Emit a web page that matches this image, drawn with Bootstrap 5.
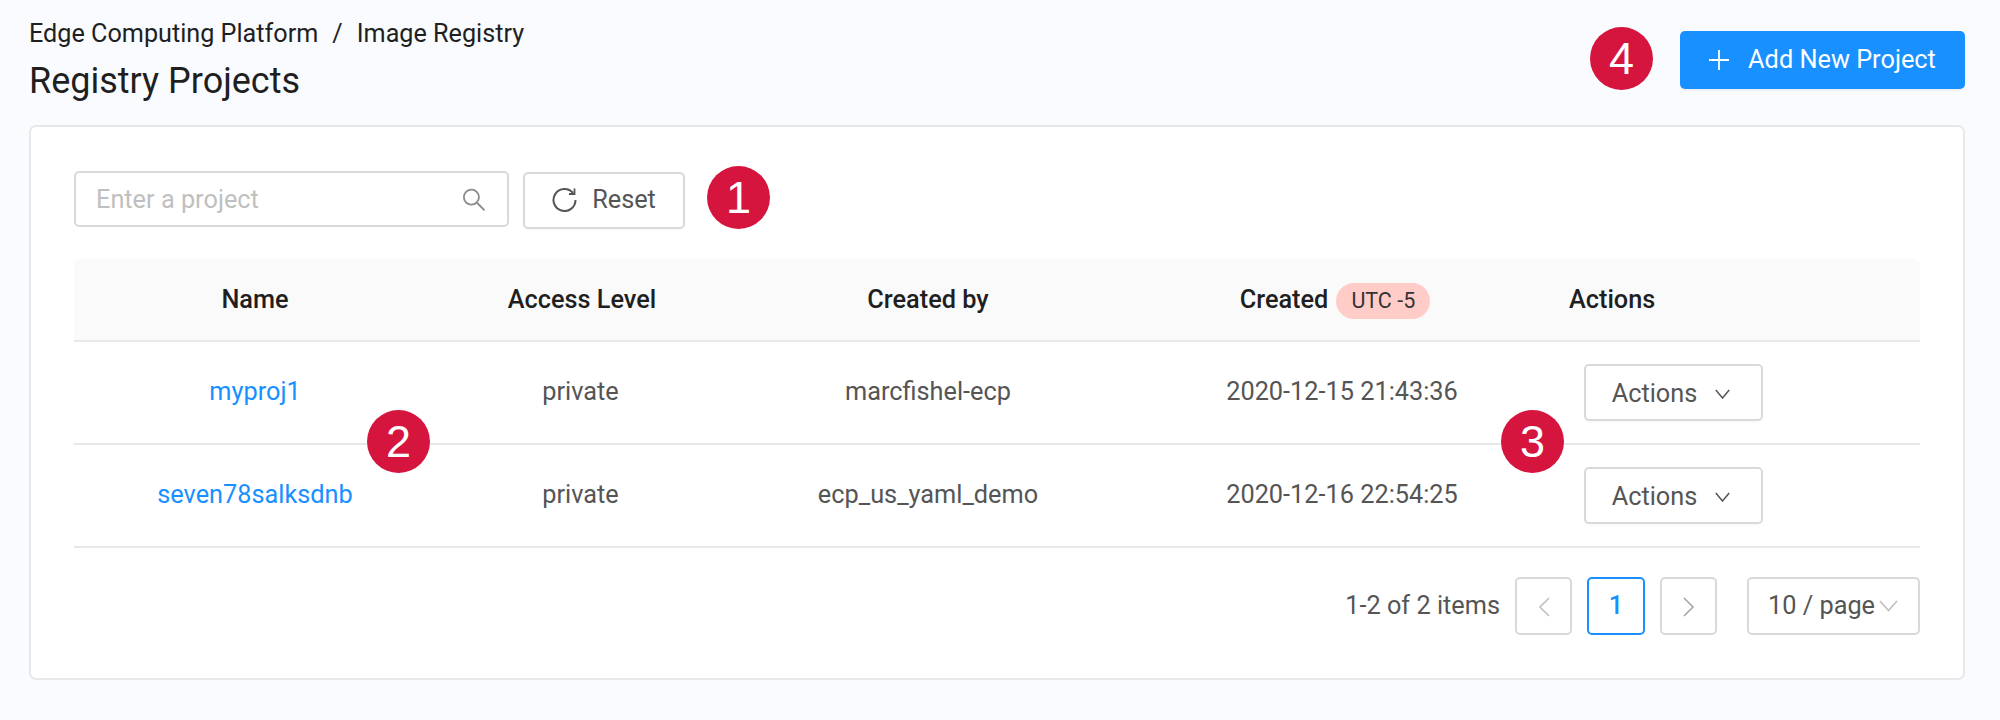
<!DOCTYPE html>
<html lang="en">
<head>
<meta charset="utf-8">
<title>Registry Projects</title>
<link href="https://cdn.jsdelivr.net/npm/bootstrap@5.3.0/dist/css/bootstrap.min.css" rel="stylesheet">
<style>
html,body{height:720px;overflow:hidden}
body{background:#f9fbff;font-family:Roboto,"Liberation Sans",sans-serif;color:#555;font-size:25.3px}
.shell{padding:17px 35px 0 29px}
.top-bar{height:108px}
.crumbs{font-size:25.2px;line-height:34px;color:#1f1f1f}
.crumb-sep{margin:0 14px}
.page-title{font-size:36px;font-weight:400;line-height:44px;color:#1f1f1f;margin:8px 0 0}
.add-btn{width:285px;height:58px;background:#1890ff;border:0;color:#fff;font-size:25.3px;border-radius:5px;margin-top:14px;box-shadow:0 2px 0 rgba(0,0,0,.04);gap:19px}
.add-btn:hover{background:#1890ff;color:#fff}
.panel{height:555px;background:#fff;border:2px solid #e8e8ea;border-radius:7px;padding:44px 43px 0 43px;position:relative}
.search-box{width:435px;height:56px;border:2px solid #d9d9d9;border-radius:5px;padding:0 22px 0 20px;background:#fff}
.search-input{border:0;outline:0;background:transparent;font-size:25.3px;color:#555;width:100%;padding:2px 0 0}
.search-input::placeholder{color:#bfbfbf;opacity:1}
.ghost-btn{height:57px;border:2px solid #d9d9d9;background:#fff;border-radius:5px;color:#555;font-size:25.3px;padding:0;box-shadow:0 2px 0 rgba(0,0,0,.015)}
.reset-btn{width:162px;margin-left:14px;margin-top:1px;gap:15px;padding-bottom:2px}
.marker{width:63px;height:63px;border-radius:50%;background:#d6153e;color:#fff;font-family:"Liberation Sans",Arial,sans-serif;font-size:45px;line-height:1;flex:none}
.marker-one{margin-left:22px;margin-top:-5px}
.marker-four{margin:10px 27px 0 0}
.marker-over{position:absolute;top:283px}
.marker-two{left:336px}
.marker-three{left:1470px}
.grid-wrap{margin-top:30px}
.data-grid{table-layout:fixed;width:1846px;margin:0;--bs-table-bg:transparent;color:#555}
.data-grid th,.data-grid td{text-align:center;border-bottom:2px solid #e8e8e8;padding:0;vertical-align:middle;font-size:25.3px}
.data-grid th{height:82px;background:#fafafa;color:#1f1f1f;font-weight:500}
.data-grid th:first-child{border-top-left-radius:7px}
.data-grid th:last-child{border-top-right-radius:7px;text-align:left;padding-left:27px}
.data-grid td{height:103px;padding-bottom:2px}
.data-grid td.access-cell{padding-right:3px}
.data-grid td.date-cell{padding-left:14px}
.data-grid td:last-child{text-align:left;padding-left:42px;padding-bottom:0}
.proj-link{color:#1890ff;text-decoration:none}
.utc-pill{display:inline-block;height:36px;line-height:36px;width:94px;text-align:center;border-radius:18px;background:#ffccc7;color:#333;font-size:21.5px;font-weight:400;margin-left:8px}
.action-btn{width:179px;height:57px;display:inline-flex;align-items:center;justify-content:center;gap:18px;padding:2px 5px 0 0}
.foot-row{margin-top:29px}
.page-btn{width:57px;height:58px;border:2px solid #d9d9d9;border-radius:5px;background:#fff;padding:0;color:#bfbfbf}
.page-btn.current{width:58px;margin:0 15px;border-color:#1890ff;color:#1890ff;font-size:25.3px;font-weight:500}
.size-box{width:173px;height:58px;border:2px solid #d9d9d9;border-radius:5px;padding:0 20px 0 19px;margin-left:30px;color:#555}
.foot-total{margin-right:15px}
</style>
</head>
<body>
<div class="shell">
  <div class="top-bar d-flex justify-content-between align-items-start">
    <div>
      <div class="crumbs">Edge Computing Platform<span class="crumb-sep">/</span>Image Registry</div>
      <h1 class="page-title">Registry Projects</h1>
    </div>
    <div class="d-flex align-items-start">
      <div class="marker marker-four d-flex align-items-center justify-content-center">4</div>
      <button type="button" class="btn add-btn d-flex align-items-center justify-content-center">
        <svg width="20" height="20" viewBox="0 0 20 20" fill="none" stroke="#fff" stroke-width="1.8"><path d="M10 0v20M0 10h20"/></svg>
        <span>Add New Project</span>
      </button>
    </div>
  </div>
  <div class="panel">
    <div class="d-flex align-items-start">
      <div class="search-box d-flex align-items-center">
        <input class="search-input" type="text" placeholder="Enter a project">
        <svg class="flex-none" width="25" height="25" viewBox="0 0 25 25" fill="none" stroke="#8c8c8c" stroke-width="2"><circle cx="10" cy="10" r="8"/><path d="M16 16l8 8"/></svg>
      </div>
      <button type="button" class="btn ghost-btn reset-btn d-flex align-items-center justify-content-center">
        <svg width="25" height="25" viewBox="0 0 25 25" fill="none" stroke="#555" stroke-width="2"><path d="M21 6A11 11 0 1 0 23.5 13"/><path d="M22.5 1.5v5.5h-5.5" stroke-width="1.8"/></svg>
        <span>Reset</span>
      </button>
      <div class="marker marker-one d-flex align-items-center justify-content-center">1</div>
    </div>
    <div class="grid-wrap">
      <table class="table data-grid">
        <colgroup><col style="width:362px"><col style="width:292px"><col style="width:400px"><col style="width:414px"><col style="width:378px"></colgroup>
        <thead>
          <tr><th>Name</th><th>Access Level</th><th>Created by</th><th>Created<span class="utc-pill">UTC -5</span></th><th>Actions</th></tr>
        </thead>
        <tbody>
          <tr>
            <td><a class="proj-link" href="#">myproj1</a></td><td class="access-cell">private</td><td>marcfishel-ecp</td><td class="date-cell">2020-12-15 21:43:36</td>
            <td><button type="button" class="btn ghost-btn action-btn"><span>Actions</span><svg width="15" height="10" viewBox="0 0 15 10" fill="none" stroke="#555" stroke-width="1.5"><path d="M.8 1l6.7 8 6.7-8"/></svg></button></td>
          </tr>
          <tr>
            <td><a class="proj-link" href="#">seven78salksdnb</a></td><td class="access-cell">private</td><td>ecp_us_yaml_demo</td><td class="date-cell">2020-12-16 22:54:25</td>
            <td><button type="button" class="btn ghost-btn action-btn"><span>Actions</span><svg width="15" height="10" viewBox="0 0 15 10" fill="none" stroke="#555" stroke-width="1.5"><path d="M.8 1l6.7 8 6.7-8"/></svg></button></td>
          </tr>
        </tbody>
      </table>
    </div>
    <div class="foot-row d-flex justify-content-end align-items-center gap-0">
      <span class="foot-total">1-2 of 2 items</span>
      <button type="button" class="page-btn" aria-label="Previous"><svg width="12" height="20" viewBox="0 0 12 20" fill="none" stroke="#bfbfbf" stroke-width="1.6"><path d="M11 1L2 10l9 9"/></svg></button>
      <button type="button" class="page-btn current">1</button>
      <button type="button" class="page-btn" aria-label="Next"><svg width="12" height="20" viewBox="0 0 12 20" fill="none" stroke="#a6a6a6" stroke-width="1.6"><path d="M1 1l9 9-9 9"/></svg></button>
      <div class="size-box d-flex align-items-center justify-content-between"><span>10 / page</span><svg width="19" height="12" viewBox="0 0 19 12" fill="none" stroke="#bfbfbf" stroke-width="1.6"><path d="M1 1l8.5 9.5L18 1"/></svg></div>
    </div>
    <div class="marker marker-over marker-two d-flex align-items-center justify-content-center">2</div>
    <div class="marker marker-over marker-three d-flex align-items-center justify-content-center">3</div>
  </div>
</div>
<script src="https://cdn.jsdelivr.net/npm/bootstrap@5.3.0/dist/js/bootstrap.bundle.min.js"></script>
</body>
</html>
